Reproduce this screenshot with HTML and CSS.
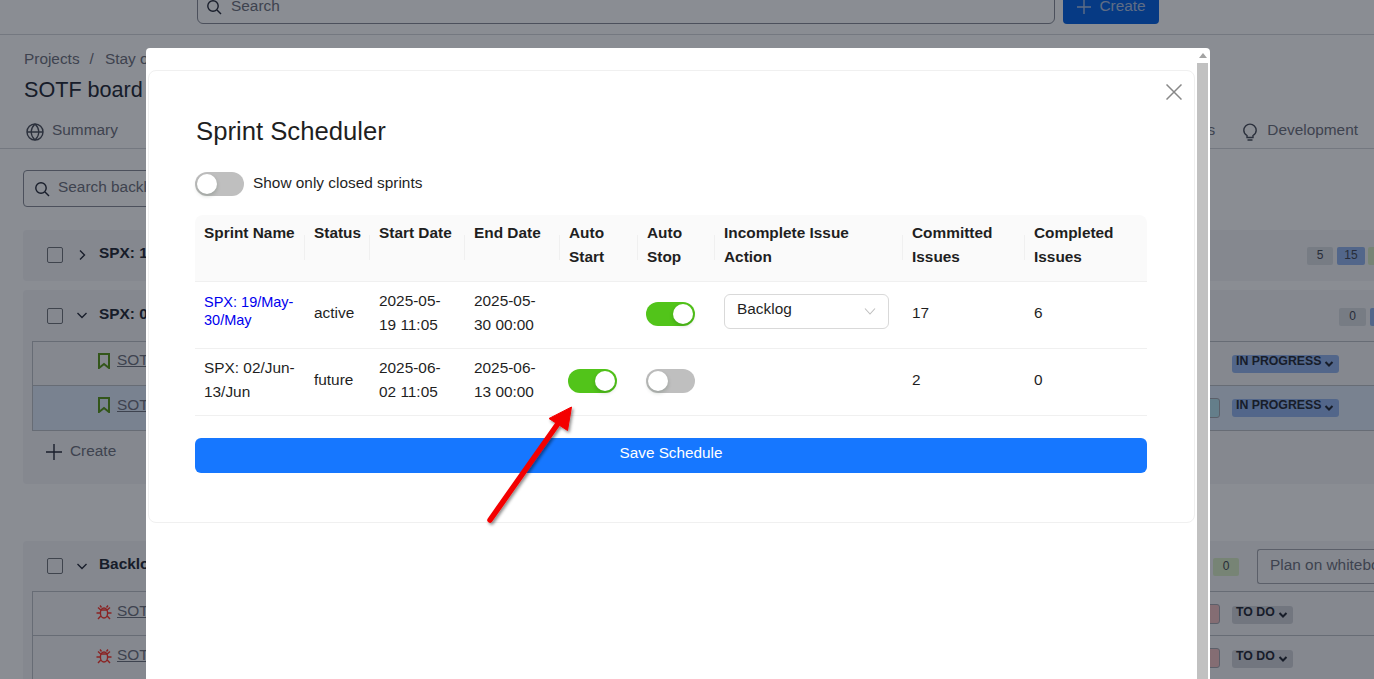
FILE: index.html
```html
<!DOCTYPE html>
<html lang="en">
<head>
    <meta charset="UTF-8">
    <meta name="viewport" content="width=device-width, initial-scale=1.0">
    <title>SOTF board - Backlog</title>
    <link rel="stylesheet" href="styles.css">
</head>
<body>
    <div class="page">
        <header class="topbar">
            <div class="top-search">
                <svg class="icon" viewBox="0 0 16 16"><circle cx="7" cy="7" r="5.2"/><path d="M11 11l4 4"/></svg>
                <span>Search</span>
            </div>
            <div class="top-create">
                <svg class="icon" viewBox="0 0 16 16"><path d="M8 1v14M1 8h14"/></svg>
                <span>Create</span>
            </div>
        </header>

        <div class="crumbs"><span>Projects</span><span class="crumb-sep">/</span><span>Stay on</span></div>
        <h1 class="page-title">SOTF board</h1>

        <nav class="tabs">
            <div class="tab">
                <svg class="icon tab-icon" viewBox="0 0 18 18"><circle cx="9" cy="9" r="8"/><path d="M1 9h16M9 1c-5 5-5 11 0 16M9 1c5 5 5 11 0 16"/></svg>
                <span>Summary</span>
            </div>
            <div class="tab tab-issues"><span>Issues</span></div>
            <div class="tab tab-dev">
                <svg class="icon tab-icon" viewBox="0 0 18 18"><path d="M6 12.500C4 11.300 2.800 9.500 2.800 7.300a6.200 6.200 0 0 1 12.400 0c0 2.200-1.200 4-3.200 5.200v2h-6zM6.500 17h5"/></svg>
                <span>Development</span>
            </div>
        </nav>

        <div class="backlog-search">
            <svg class="icon" viewBox="0 0 16 16"><circle cx="7" cy="7" r="5.2"/><path d="M11 11l4 4"/></svg>
            <span>Search backlog</span>
        </div>

        <section class="panel panel-first">
            <div class="panel-head">
                <span class="check"></span>
                <svg class="icon chev" viewBox="0 0 12 12"><path d="M4 1.500l4.500 4.500L4 10.500"/></svg>
                <strong>SPX: 19/May</strong>
                <div class="counts">
                    <span class="count">5</span>
                    <span class="count count-blue">15</span>
                    <span class="count count-green count-cut"></span>
                </div>
            </div>
        </section>

        <section class="panel panel-second">
            <div class="panel-head">
                <span class="check"></span>
                <svg class="icon chev" viewBox="0 0 12 12"><path d="M1.500 4l4.500 4.500L10.500 4"/></svg>
                <strong>SPX: 02/Jun</strong>
                <div class="counts counts-low">
                    <span class="count">0</span>
                    <span class="count count-blue count-cut-small"></span>
                </div>
            </div>
            <div class="issue">
                <svg class="icon type story" viewBox="0 0 12 16"><path d="M1 1h10v14l-5-4-5 4z"/></svg>
                <a class="issue-key">SOTF-118</a>
                <span class="chip chip-none"></span>
                <span class="status status-blue">IN PROGRESS <svg class="icon caret" viewBox="0 0 10 10"><path d="M1.500 3l3.500 3.500L8.500 3"/></svg></span>
            </div>
            <div class="issue issue-selected">
                <svg class="icon type story" viewBox="0 0 12 16"><path d="M1 1h10v14l-5-4-5 4z"/></svg>
                <a class="issue-key">SOTF-121</a>
                <span class="chip chip-teal"></span>
                <span class="status status-blue">IN PROGRESS <svg class="icon caret" viewBox="0 0 10 10"><path d="M1.500 3l3.500 3.500L8.500 3"/></svg></span>
            </div>
            <div class="add-issue">
                <svg class="icon" viewBox="0 0 16 16"><path d="M8 0v16M0 8h16"/></svg>
                <span>Create</span>
            </div>
        </section>

        <section class="panel panel-third">
            <div class="panel-head">
                <span class="check"></span>
                <svg class="icon chev" viewBox="0 0 12 12"><path d="M1.500 4l4.500 4.500L10.500 4"/></svg>
                <strong>Backlog</strong>
                <div class="counts counts-backlog">
                    <span class="count count-green">0</span>
                    <span class="plan-box">Plan on whiteboard</span>
                </div>
            </div>
            <div class="issue">
                <svg class="icon type bug" viewBox="0 0 16 16"><ellipse cx="8" cy="9" rx="3.600" ry="5"/><path d="M5.500 3.500L4 1.500M10.500 3.500L12 1.500M5 6h6M4.500 9H0.500M15.500 9h-4M4.800 12L2 15M11.200 12l2.800 3M4.800 6L2 3.500M11.200 6L14 3.500"/></svg>
                <a class="issue-key">SOTF-97</a>
                <span class="chip chip-red"></span>
                <span class="status status-grey">TO DO <svg class="icon caret" viewBox="0 0 10 10"><path d="M1.500 3l3.500 3.500L8.500 3"/></svg></span>
            </div>
            <div class="issue">
                <svg class="icon type bug" viewBox="0 0 16 16"><ellipse cx="8" cy="9" rx="3.600" ry="5"/><path d="M5.500 3.500L4 1.500M10.500 3.500L12 1.500M5 6h6M4.500 9H0.500M15.500 9h-4M4.800 12L2 15M11.200 12l2.800 3M4.800 6L2 3.500M11.200 6L14 3.500"/></svg>
                <a class="issue-key">SOTF-98</a>
                <span class="chip chip-red"></span>
                <span class="status status-grey">TO DO <svg class="icon caret" viewBox="0 0 10 10"><path d="M1.500 3l3.500 3.500L8.500 3"/></svg></span>
            </div>
        </section>
    </div>

    <div class="overlay"></div>

    <div class="modal">
        <div class="modal-body">
            <div class="modal-card">
                <svg class="modal-close" viewBox="0 0 16 16"><path d="M0.500 0.500l15 15M15.500 0.500l-15 15"/></svg>
                <h2>Sprint Scheduler</h2>
                <div class="closed-filter">
                    <span class="toggle"></span>
                    <span class="filter-label">Show only closed sprints</span>
                </div>
                <table class="sprints">
                    <colgroup>
                        <col class="col-name"><col class="col-status"><col class="col-date"><col class="col-date">
                        <col class="col-start"><col class="col-stop"><col class="col-action"><col class="col-count"><col class="col-count">
                    </colgroup>
                    <thead>
                        <tr>
                            <th>Sprint Name</th>
                            <th>Status</th>
                            <th>Start Date</th>
                            <th>End Date</th>
                            <th>Auto Start</th>
                            <th>Auto Stop</th>
                            <th>Incomplete Issue Action</th>
                            <th>Committed Issues</th>
                            <th>Completed Issues</th>
                        </tr>
                    </thead>
                    <tbody>
                        <tr>
                            <td><a class="sprint-link">SPX: 19/May-30/May</a></td>
                            <td>active</td>
                            <td>2025-05-19 11:05</td>
                            <td>2025-05-30 00:00</td>
                            <td></td>
                            <td><span class="toggle on"></span></td>
                            <td>
                                <div class="select">
                                    <span>Backlog</span>
                                    <svg viewBox="0 0 12 12"><path d="M1 3.500l5 5.500 5-5.500"/></svg>
                                </div>
                            </td>
                            <td>17</td>
                            <td>6</td>
                        </tr>
                        <tr>
                            <td>SPX: 02/Jun-13/Jun</td>
                            <td>future</td>
                            <td>2025-06-02 11:05</td>
                            <td>2025-06-13 00:00</td>
                            <td><span class="toggle on"></span></td>
                            <td><span class="toggle"></span></td>
                            <td></td>
                            <td>2</td>
                            <td>0</td>
                        </tr>
                    </tbody>
                </table>
                <button class="save-btn" type="button">Save Schedule</button>
            </div>
        </div>
        <div class="scrollbar">
            <span class="scroll-up"></span>
            <span class="scroll-thumb"></span>
        </div>
    </div>

    <svg class="arrow" viewBox="0 0 1374 679">
        <defs>
            <filter id="arrow-shadow" x="-20%" y="-20%" width="150%" height="150%">
                <feDropShadow dx="1.500" dy="2" stdDeviation="1.500" flood-color="#000" flood-opacity="0.45"/>
            </filter>
        </defs>
        <g filter="url(#arrow-shadow)">
            <path d="M490 520L557 425" stroke="#f40000" stroke-width="5.500" stroke-linecap="round"/>
            <path d="M571.500 407L549 418.500L567.500 430.500z" fill="#f40000" stroke="#f40000" stroke-linejoin="round"/>
        </g>
    </svg>
</body>
</html>
```

FILE: styles.css
```css
html, body {
    margin: 0;
    padding: 0;
    height: 100%;
    overflow: hidden;
}

body {
    font-family: 'Liberation Sans', Arial, sans-serif;
    font-size: 15.4px;
    color: #1f1f1f;
    background-color: #fff;
}

.page {
    height: 679px;
    overflow: hidden;
    color: #747682;
}

.icon {
    fill: none;
    stroke: #2f3340;
    stroke-width: 1.4;
    flex-shrink: 0;
}

/* top bar */
.topbar {
    height: 24px;
    border-bottom: 1px solid #d6d8dc;
    display: flex;
    align-items: flex-end;
    gap: 8px;
    padding: 0 0 10px 197px;
}

.top-search {
    width: 858px;
    height: 35px;
    flex-shrink: 0;
    border: 1px solid #8c8f99;
    border-radius: 6px;
    display: flex;
    align-items: center;
    gap: 9px;
    padding: 0 0 2px 8px;
    box-sizing: border-box;
}

.top-search .icon {
    width: 16px;
    height: 16px;
    margin-top: 3px;
}

.top-create {
    width: 96px;
    height: 35px;
    flex-shrink: 0;
    background-color: #0c66e4;
    border-radius: 4px;
    color: #b0c4e4;
    display: flex;
    align-items: center;
    justify-content: center;
    gap: 7px;
    padding-bottom: 2px;
    box-sizing: border-box;
}

.top-create .icon {
    width: 16px;
    height: 16px;
    stroke: #b0c4e4;
    margin-top: 3px;
}

/* page head */
.crumbs {
    height: 24px;
    line-height: 24px;
    margin-top: 12px;
    padding-left: 24px;
    white-space: nowrap;
}

.crumb-sep {
    margin: 0 11px 0 10px;
}

.page-title {
    margin: 0;
    padding-left: 24px;
    height: 38px;
    line-height: 38px;
    font-size: 21.600px;
    font-weight: normal;
    color: #2c303c;
}

.tabs {
    height: 35px;
    border-bottom: 1px solid #d6d8dc;
    display: flex;
    align-items: center;
    padding: 4px 16px 0 26px;
}

.tab {
    display: flex;
    align-items: center;
    gap: 8px;
    white-space: nowrap;
}

.tab span {
    margin-top: -1px;
}

.tab-icon {
    width: 18px;
    height: 18px;
    margin-top: 3px;
    stroke: #50545f;
}

.tab-issues {
    margin-left: auto;
}

.tab-dev {
    margin-left: 26px;
}

.backlog-search {
    margin: 21px 0 0 23px;
    width: 300px;
    height: 37px;
    border: 1px solid #8c8f99;
    border-radius: 4px;
    box-sizing: border-box;
    display: flex;
    align-items: center;
    gap: 8px;
    padding: 0 0 4px 10px;
    white-space: nowrap;
}

.backlog-search .icon {
    width: 16px;
    height: 16px;
    margin-top: 5px;
}

/* sprint panels */
.panel {
    margin-left: 23px;
    background-color: #f5f6f8;
    border-radius: 4px 0 0 4px;
}

.panel-first {
    margin-top: 23px;
    height: 51px;
}

.panel-second {
    margin-top: 9px;
    height: 194px;
}

.panel-third {
    margin-top: 57px;
    height: 200px;
}

.panel-head {
    height: 51px;
    display: flex;
    align-items: center;
    padding-left: 24px;
    color: #2c303c;
    white-space: nowrap;
}

.panel-head strong {
    margin-top: -4px;
}

.panel-first .panel-head {
    height: 50px;
}

.panel-third .panel-head {
    height: 50px;
}

.check {
    width: 16px;
    height: 16px;
    flex-shrink: 0;
    border: 1px solid #75787f;
    border-radius: 2px;
    box-sizing: border-box;
}

.chev {
    width: 12px;
    height: 12px;
    margin: -1px 11px 0 13px;
}

.counts {
    margin-left: auto;
    margin-top: 1px;
    display: flex;
    align-items: center;
    gap: 4px;
    color: #4a4e59;
    font-size: 12px;
}

.count {
    height: 18px;
    line-height: 16px;
    width: 26px;
    text-align: center;
    background-color: #dcdfe4;
    border-radius: 2px;
}

.count-blue {
    width: 28px;
    background-color: #98b8ee;
}

.count-green {
    background-color: #dcefc8;
}

.count-cut {
    width: 6px;
    margin-left: -1px;
    border-radius: 2px 0 0 2px;
}

.count-cut-small {
    width: 4px;
    border-radius: 2px 0 0 2px;
}

.counts-low {
    margin-top: 3px;
}

.counts-low .count:first-child {
    width: 27px;
}

.counts-backlog {
    gap: 18px;
}

.plan-box {
    width: 117px;
    height: 35px;
    line-height: 29px;
    padding-left: 12px;
    box-sizing: border-box;
    border: 1px solid #a9abb2;
    border-right: none;
    border-radius: 3px 0 0 3px;
    font-size: 15.4px;
    overflow: hidden;
    color: #747682;
}

.issue {
    height: 43px;
    margin-left: 9px;
    border-top: 1px solid #bfc2c8;
    border-left: 1px solid #bfc2c8;
    display: flex;
    align-items: center;
    padding: 0 35px 0 60px;
}

.issue-selected {
    height: 44px;
    background-color: #dfeafa;
    border-bottom: 1px solid #bfc2c8;
}

.type {
    width: 16px;
    height: 16px;
    margin-top: -6px;
    margin-right: 5px;
    margin-left: 4px;
}

.story {
    width: 12px;
    stroke: #5e9a20;
    margin-left: 5px;
    margin-right: 7px;
    stroke-width: 2;
}

.bug {
    stroke: #ff3b30;
    margin-left: 3px;
    margin-top: -4px;
    margin-right: 5px;
    stroke-width: 1.4;
}

.issue-key {
    text-decoration: underline;
    margin-top: -7px;
}

.panel-third .issue-key {
    margin-top: -5px;
}

.chip {
    margin-left: auto;
    width: 30px;
    height: 20px;
    box-sizing: border-box;
    border: 1px solid #a9abb2;
    border-radius: 3px;
}

.chip-none {
    visibility: hidden;
}

.chip-teal {
    background-color: #b9e3ef;
}

.chip-red {
    background-color: #f4c4c4;
}

.status {
    height: 18px;
    margin-left: 12px;
    padding: 0 4px;
    border-radius: 3px;
    display: flex;
    align-items: flex-start;
    gap: 3px;
    line-height: 13px;
    font-size: 12.300px;
    font-weight: bold;
    color: #2c303c;
    white-space: nowrap;
    box-sizing: border-box;
}

.status-blue {
    width: 107px;
    background-color: #98b8ee;
}

.status-grey {
    width: 61px;
    margin-top: 2px;
    margin-right: 46px;
    background-color: #d3d5da;
}

.caret {
    width: 10px;
    height: 10px;
    margin-top: 4px;
    stroke-width: 2;
    stroke: #2c303c;
}

.add-issue {
    display: flex;
    align-items: center;
    gap: 8px;
    padding: 10px 0 0 23px;
    height: 20px;
}

.add-issue .icon {
    width: 16px;
    height: 16px;
    margin-top: 2px;
}

.overlay {
    position: absolute;
    inset: 0;
    background-color: rgba(0, 6, 20, 0.46);
}

/* modal */
.modal {
    position: absolute;
    left: 146px;
    top: 48px;
    width: 1064px;
    height: 631px;
    background: #fff;
    border-radius: 4px 4px 0 0;
    display: flex;
}

.modal-body {
    flex: 1;
    padding: 22px 1px 0 2px;
}

.modal-card {
    position: relative;
    border: 1px solid #f0f0f0;
    border-radius: 8px;
    padding: 44px 47px 49px 46px;
}

.modal-close {
    position: absolute;
    top: 13px;
    right: 12px;
    width: 16px;
    height: 16px;
    fill: none;
    stroke: #888;
    stroke-width: 1.5;
}

h2 {
    margin: 0 0 25px 1px;
    font-size: 25.700px;
    line-height: 32px;
    font-weight: normal;
    color: #1f1f1f;
}

.closed-filter {
    display: flex;
    align-items: center;
    gap: 9px;
    margin-bottom: 19px;
}

.filter-label {
    margin-top: -2px;
}

.toggle {
    display: inline-block;
    width: 49px;
    height: 24px;
    border-radius: 12px;
    background-color: #bfbfbf;
    position: relative;
    vertical-align: middle;
    flex-shrink: 0;
}

.toggle::after {
    content: "";
    position: absolute;
    top: 2px;
    left: 2px;
    width: 20px;
    height: 20px;
    border-radius: 50%;
    background-color: #fff;
    box-shadow: 0 2px 4px rgba(0, 35, 11, 0.2);
}

.toggle.on {
    background-color: #52c41a;
}

.toggle.on::after {
    left: 27px;
}

/* table */
.sprints {
    width: 952px;
    border-collapse: collapse;
    table-layout: fixed;
    line-height: 24px;
}

.col-name { width: 110px; }
.col-status { width: 65px; }
.col-date { width: 95px; }
.col-start { width: 78px; }
.col-stop { width: 77px; }
.col-action { width: 188px; }
.col-count { width: 122px; }

.sprints th {
    background-color: #fafafa;
    font-weight: bold;
    text-align: left;
    vertical-align: top;
    padding: 6px 9px 12px;
    border-bottom: 1px solid #f0f0f0;
    position: relative;
}

.sprints th:first-child {
    border-top-left-radius: 8px;
}

.sprints th:last-child {
    border-top-right-radius: 8px;
}

.sprints th:not(:last-child)::after {
    content: "";
    position: absolute;
    right: 0;
    top: 20px;
    width: 1px;
    height: 25px;
    background-color: #f0f0f0;
}

.sprints td {
    padding: 7px 9px 11px;
    border-bottom: 1px solid #f0f0f0;
    vertical-align: middle;
}

.sprints td .toggle {
    margin: 2px 0 0 -1px;
}

.sprint-link {
    color: #0000ee;
    font-size: 14.500px;
    line-height: 18.500px;
    display: block;
    margin-top: -4px;
}

.select {
    width: 165px;
    height: 35px;
    margin-top: -4px;
    box-sizing: border-box;
    border: 1px solid #d9d9d9;
    border-radius: 6px;
    padding: 0 12px;
    display: flex;
    align-items: center;
    justify-content: space-between;
    line-height: 28px;
}

.select span {
    margin-top: -4px;
}

.select svg {
    width: 12px;
    height: 12px;
    fill: none;
    stroke: #bfbfbf;
    stroke-width: 1.1;
}

.save-btn {
    display: block;
    width: 952px;
    height: 35px;
    margin-top: 22px;
    padding: 0 0 5px;
    border: none;
    border-radius: 6px;
    background-color: #1677ff;
    color: #fff;
    font-family: inherit;
    font-size: 15.300px;
}

/* scrollbar */
.scrollbar {
    width: 14px;
    flex-shrink: 0;
    display: flex;
    flex-direction: column;
    align-items: center;
    padding-right: 1px;
    box-sizing: border-box;
}

.scroll-up {
    width: 0;
    height: 0;
    margin: 5px 0 4px;
    border-left: 4px solid transparent;
    border-right: 4px solid transparent;
    border-bottom: 5px solid #a3a3a3;
}

.scroll-thumb {
    flex: 1;
    width: 11px;
    margin-top: 1px;
    background-color: #c1c1c1;
}

.arrow {
    position: absolute;
    left: 0;
    top: 0;
    width: 1374px;
    height: 679px;
    pointer-events: none;
}
```
